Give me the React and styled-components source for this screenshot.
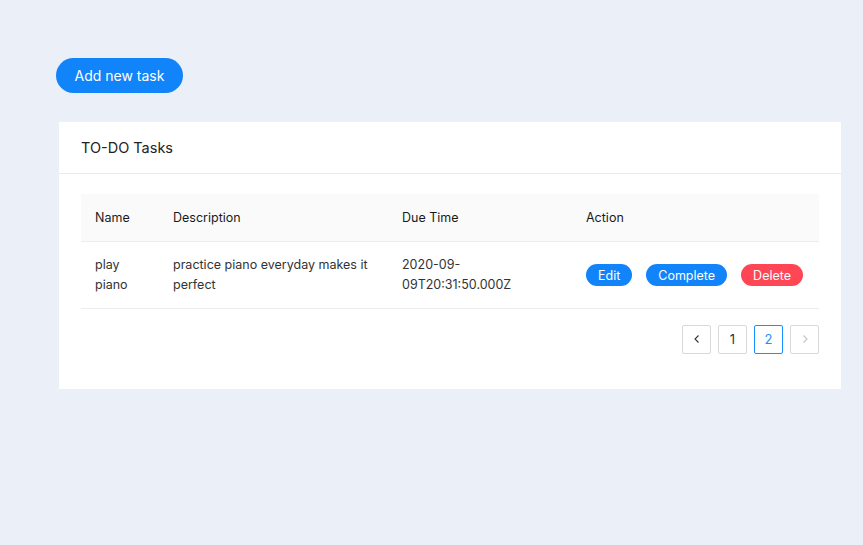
import React from 'react';
import styled, { createGlobalStyle } from 'styled-components';

const GlobalStyle = createGlobalStyle`
  html, body {
    margin: 0;
    padding: 0;
    background: #ebeff8;
    font-family: Inter, "Liberation Sans", Arial, sans-serif;
    color: #262626;
  }
  * { box-sizing: border-box; }
`;

const Page = styled.div`
  min-height: 545px;
  padding: 58px 22px 40px 56px;
`;

const AddButton = styled.button`
  display: block;
  height: 35px;
  width: 127px;
  border: none;
  border-radius: 18px;
  background: #1184fa;
  color: #fff;
  font-family: inherit;
  font-size: 14px;
  cursor: pointer;
  margin-bottom: 29px;
`;

const Card = styled.section`
  background: #fff;
  margin-left: 3px;
  width: 782px;
`;

const CardHeader = styled.header`
  height: 52px;
  padding: 0 22px;
  display: flex;
  align-items: center;
  border-bottom: 1px solid #ebebeb;
  font-size: 14.5px;
  color: #222;
`;

const CardBody = styled.div`
  padding: 20px 22px 35px;
`;

const Table = styled.table`
  width: 100%;
  table-layout: fixed;
  border-collapse: collapse;
  font-size: 12.5px;
`;

const Th = styled.th`
  text-align: left;
  font-weight: 400;
  background: #fafafa;
  height: 47px;
  padding: 0 14px;
  border-bottom: 1px solid #ececec;
  color: #1a1a1a;
  width: ${p => (p.$w ? `${p.$w}px` : 'auto')};
`;

const Td = styled.td`
  padding: 1px 14px 0;
  height: 67px;
  line-height: 20px;
  border-bottom: 1px solid #ececec;
  color: #333;
  vertical-align: middle;
`;

const Actions = styled.div`
  display: flex;
  gap: 14px;
`;

const Pill = styled.button`
  height: 22px;
  padding: 0 12px;
  border: none;
  border-radius: 11px;
  background: ${p => (p.$danger ? '#ff4655' : '#1184fa')};
  color: #fff;
  font-family: inherit;
  font-size: 12.5px;
  cursor: pointer;
`;

const Pager = styled.nav`
  display: flex;
  justify-content: flex-end;
  gap: 7px;
  margin-top: 16px;
`;

const PageItem = styled.button`
  width: 29px;
  height: 29px;
  border: 1px solid ${p => (p.$active ? '#1890ff' : '#d9d9d9')};
  border-radius: 2px;
  background: #fff;
  color: ${p => (p.$active ? '#1890ff' : p.$disabled ? '#c4c4c4' : '#333')};
  font-family: inherit;
  font-size: 13px;
  display: flex;
  align-items: center;
  justify-content: center;
  padding: 0;
`;

const Chevron = ({ dir }) => (
  <svg width="10" height="10" viewBox="0 0 10 10" fill="none" stroke="currentColor" strokeWidth="1.1">
    {dir === 'left' ? <path d="M6.5 1.5 3 5l3.5 3.5" /> : <path d="M3.5 1.5 7 5 3.5 8.5" />}
  </svg>
);

const tasks = [
  {
    name: 'play piano',
    description: 'practice piano everyday makes it perfect',
    due: ['2020-09-', '09T20:31:50.000Z'],
  },
];

export default function App() {
  return (
    <Page>
      <GlobalStyle />
      <AddButton>Add new task</AddButton>
      <Card>
        <CardHeader>TO-DO Tasks</CardHeader>
        <CardBody>
          <Table>
            <thead>
              <tr>
                <Th $w={78}>Name</Th>
                <Th $w={229}>Description</Th>
                <Th $w={184}>Due Time</Th>
                <Th>Action</Th>
              </tr>
            </thead>
            <tbody>
              {tasks.map(t => (
                <tr key={t.name}>
                  <Td>{t.name}</Td>
                  <Td>{t.description}</Td>
                  <Td>
                    {t.due[0]}
                    <br />
                    {t.due[1]}
                  </Td>
                  <Td>
                    <Actions>
                      <Pill>Edit</Pill>
                      <Pill>Complete</Pill>
                      <Pill $danger>Delete</Pill>
                    </Actions>
                  </Td>
                </tr>
              ))}
            </tbody>
          </Table>
          <Pager>
            <PageItem><Chevron dir="left" /></PageItem>
            <PageItem>1</PageItem>
            <PageItem $active>2</PageItem>
            <PageItem $disabled><Chevron dir="right" /></PageItem>
          </Pager>
        </CardBody>
      </Card>
    </Page>
  );
}
